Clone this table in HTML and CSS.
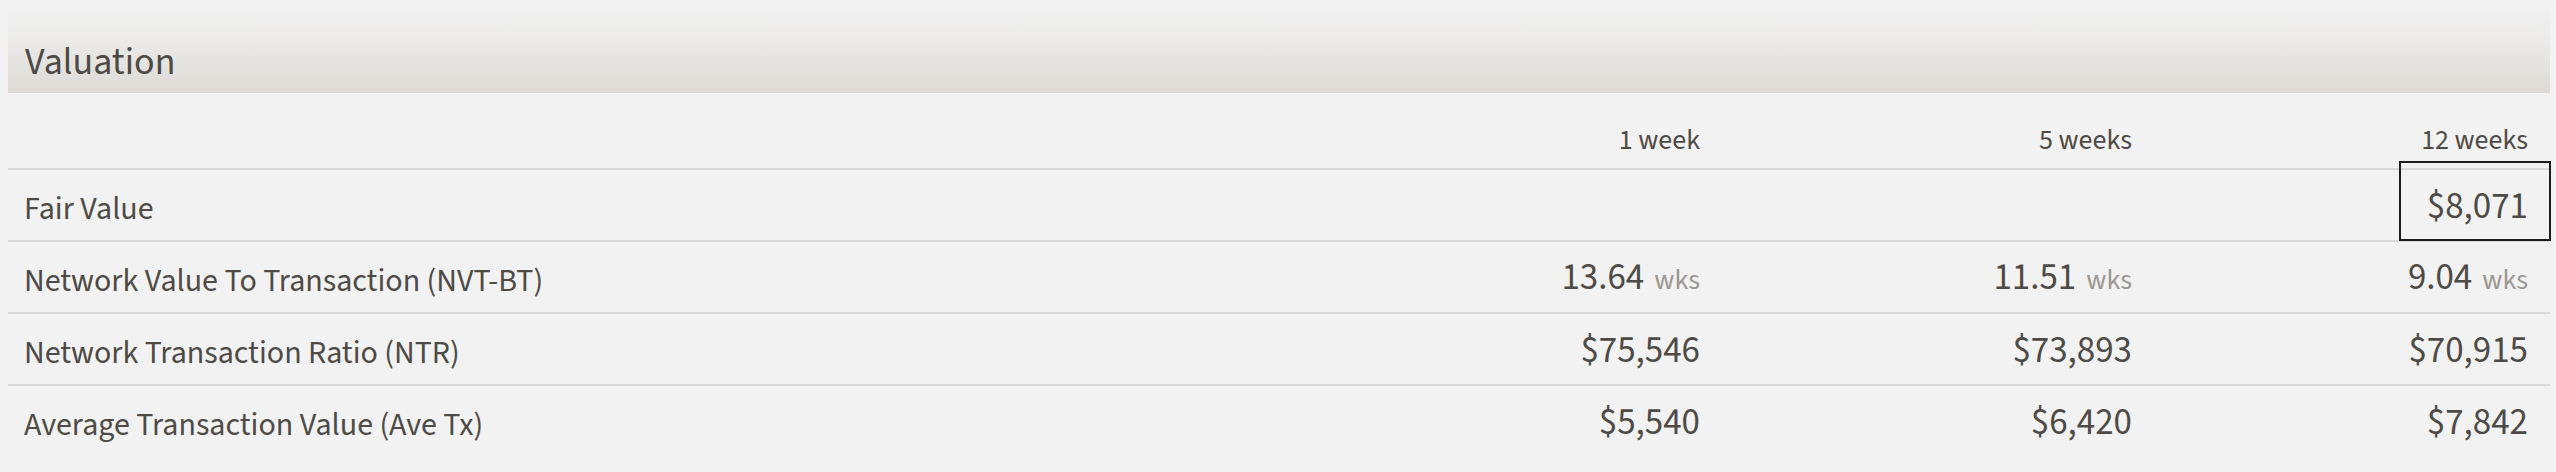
FILE: index.html
```html
<!DOCTYPE html>
<html>
<head>
<meta charset="utf-8">
<link rel="stylesheet" href="styles.css">
</head>
<body>
<section class="panel">
  <h2 class="panel-title">Valuation</h2>
  <div class="table">
    <div class="row head">
      <div class="cell label"></div>
      <div class="cell num">1 week</div>
      <div class="cell num">5 weeks</div>
      <div class="cell num">12 weeks</div>
    </div>
    <div class="row">
      <div class="cell label">Fair Value</div>
      <div class="cell num val"></div>
      <div class="cell num val"></div>
      <div class="cell num val focused">$8,071</div>
    </div>
    <div class="row">
      <div class="cell label">Network Value To Transaction (NVT-BT)</div>
      <div class="cell num val">13.64<span class="unit">wks</span></div>
      <div class="cell num val">11.51<span class="unit">wks</span></div>
      <div class="cell num val">9.04<span class="unit">wks</span></div>
    </div>
    <div class="row">
      <div class="cell label">Network Transaction Ratio (NTR)</div>
      <div class="cell num val">$75,546</div>
      <div class="cell num val">$73,893</div>
      <div class="cell num val">$70,915</div>
    </div>
    <div class="row last">
      <div class="cell label">Average Transaction Value (Ave Tx)</div>
      <div class="cell num val">$5,540</div>
      <div class="cell num val">$6,420</div>
      <div class="cell num val">$7,842</div>
    </div>
  </div>
</section>
</body>
</html>
```
FILE: styles.css
```css
html, body {
  margin: 0;
  padding: 0;
  background: #f2f2f2;
}
body {
  font-family: "Source Sans 3", "Source Sans Pro", "Lato", sans-serif;
  color: #4e4a46;
}
.panel {
  width: 2542px;
  margin: 8px 0 0 8px;
}
.panel-title {
  margin: 0;
  height: 85px;
  box-sizing: border-box;
  padding: 27px 0 0 17px;
  font-size: 38px;
  font-weight: 400;
  line-height: 54px;
  color: #4d4a46;
  background: linear-gradient(to bottom, #f1f1f1 0%, #ecebea 35%, #e3e1dd 75%, #dcd9d4 100%);
}
.row {
  display: grid;
  grid-template-columns: 1fr 432px 432px 396px;
  height: 72px;
  box-sizing: border-box;
  border-bottom: 2px solid #d9d9d9;
  align-items: center;
}
.row.head {
  height: 77px;
  align-items: end;
  padding-bottom: 8px;
}
.row.last {
  border-bottom: none;
  height: 70px;
}
.cell.label {
  padding-left: 16px;
  font-size: 32px;
  line-height: 46px;
  padding-top: 8px;
}
.cell.num {
  text-align: right;
  padding-right: 22px;
}
.head .cell.num {
  font-size: 28px;
  line-height: 40px;
}
.cell.val {
  font-size: 37px;
  line-height: 52px;
  padding-top: 4px;
}
.unit {
  font-size: 28px;
  color: #9a9794;
  margin-left: 10px;
}
.focused {
  position: relative;
  align-self: stretch;
  display: flex;
  align-items: center;
  justify-content: flex-end;
}
.focused::after {
  content: "";
  position: absolute;
  right: -1px;
  top: -9px;
  bottom: -1px;
  width: 152px;
  box-sizing: border-box;
  border: 2px solid #1c1c1c;
}
```
